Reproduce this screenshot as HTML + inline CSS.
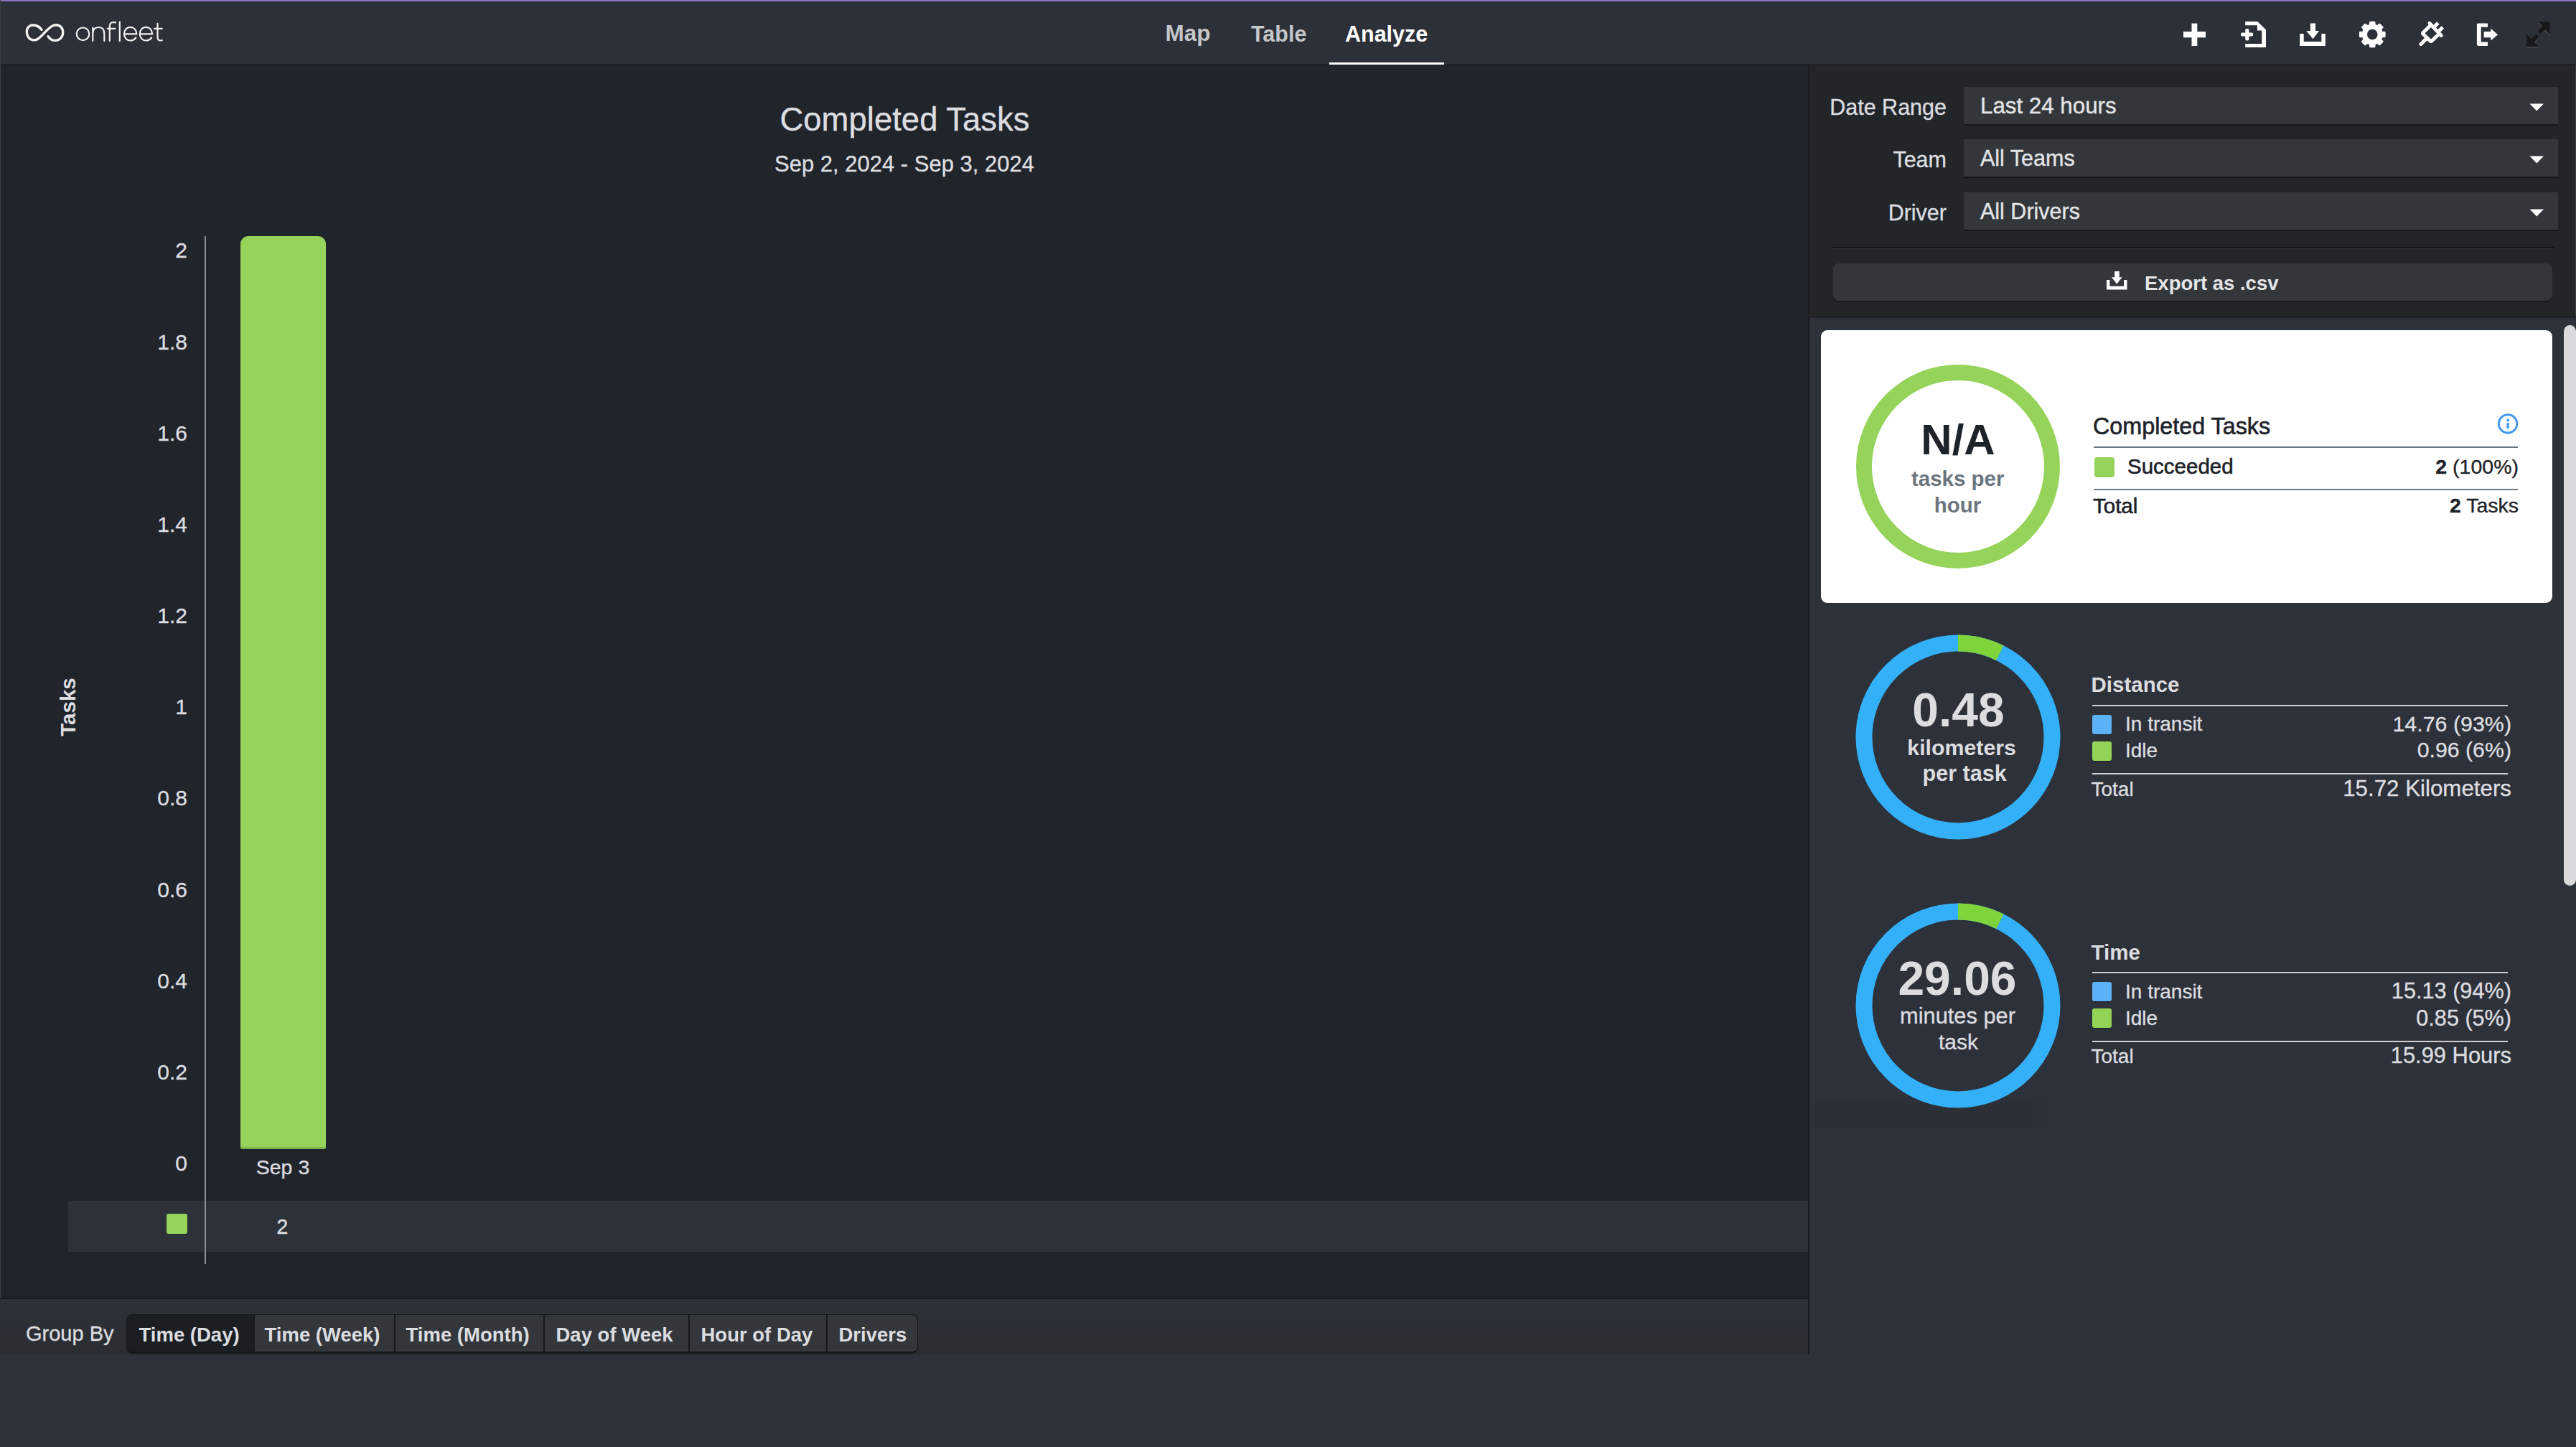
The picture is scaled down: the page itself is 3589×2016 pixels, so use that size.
<!DOCTYPE html>
<html><head><meta charset="utf-8"><title>Onfleet Analyze</title>
<style>
html,body{margin:0;padding:0;width:3589px;height:2016px;overflow:hidden;background:#2d3139;}
body{position:relative;font-family:"Liberation Sans", sans-serif;}
</style></head><body>
<div style="position:absolute;left:0px;top:0px;width:3589px;height:2016px;background:#2d3139;"></div>
<div style="position:absolute;left:0px;top:0px;width:3589px;height:2px;background:#8a70b8;"></div>
<div style="position:absolute;left:0px;top:2px;width:3589px;height:87px;background:#2c3038;"></div>
<div style="position:absolute;left:0px;top:89px;width:3589px;height:1px;background:#1c1f24;"></div>
<div style="position:absolute;left:0px;top:90px;width:2519px;height:1718px;background:#20242b;"></div>
<div style="position:absolute;left:2519px;top:90px;width:2px;height:1797px;background:#181b1f;"></div>
<div style="position:absolute;left:2521px;top:90px;width:1068px;height:351px;background:#222629;"></div>
<div style="position:absolute;left:2521px;top:441px;width:1068px;height:2px;background:#1c1f23;"></div>
<div style="position:absolute;left:3588px;top:90px;width:1px;height:351px;background:#3a3e42;"></div>
<div style="position:absolute;left:2526px;top:1535px;width:334px;height:37px;background:linear-gradient(90deg,rgba(20,30,25,0.09) 85%,rgba(20,30,25,0));"></div>
<div style="position:absolute;left:0px;top:0px;width:1px;height:1886px;background:#3b3f45;"></div>
<div style="position:absolute;left:95px;top:1673px;width:2424px;height:71px;background:#2d3139;"></div>
<div style="position:absolute;left:0px;top:1808px;width:2519px;height:2px;background:#15181c;"></div>
<div style="position:absolute;left:0px;top:1810px;width:2519px;height:77px;background:linear-gradient(#2d3139,#2a2e33);"></div>
<svg style="position:absolute;left:0;top:0" width="240" height="89" viewBox="0 0 240 89">
<g fill="none" stroke="#f2f2f2" stroke-linecap="round">
<path transform="translate(62.3 45.4) scale(0.95 0.88) translate(-62 -45)" vector-effect="non-scaling-stroke" d="M57.5 40.5 C53 33.5 45 31.5 40 34.5 C35 37.5 34.5 46 37.5 51.5 C40.5 57 47 58.5 52 55 C58 51 66 38 74 34 C80 31 87 34 88.5 42 C90 50 85 57.5 77 57.5 C72 57.5 69 54 67 51" stroke-width="3.4"/>
<g stroke-width="2.2">
<circle cx="115.5" cy="47.3" r="8.8"/>
<path d="M129.3 57 V38.5 M129.3 47 C129.3 41 132.5 38 137.5 38 C142.5 38 145.3 41 145.3 47 V57"/>
<path d="M152.8 57 V37 C152.8 32.5 155 31 158 31 L161 31.3 M149.8 39.8 H160.5"/>
<path d="M166.8 30.5 V57"/>
<path d="M173.2 47.3 H190.2 C190.2 41.5 186.5 37.8 181.7 37.8 C176.5 37.8 173 42 173 47.3 C173 52.8 176.8 56.5 181.7 56.5 C185 56.5 187.5 55 189.3 52.5"/>
<path d="M195 47.3 H212 C212 41.5 208.3 37.8 203.5 37.8 C198.3 37.8 194.8 42 194.8 47.3 C194.8 52.8 198.6 56.5 203.5 56.5 C206.8 56.5 209.3 55 211.1 52.5"/>
<path d="M219.5 32.8 V51.5 C219.5 55 221 56.5 223.5 56.5 L225.8 56.2 M215 39.8 H225.8"/>
</g></g></svg>
<div style="position:absolute;top:31.34px;font-size:31.5px;line-height:31.5px;height:31.5px;color:#c4c6c9;font-weight:700;white-space:nowrap;left:1623.50px;">Map</div>
<div style="position:absolute;top:32.18px;font-size:30.5px;line-height:30.5px;height:30.5px;color:#c4c6c9;font-weight:700;white-space:nowrap;left:1743.00px;">Table</div>
<div style="position:absolute;top:32.18px;font-size:30.5px;line-height:30.5px;height:30.5px;color:#ffffff;font-weight:700;white-space:nowrap;left:1874.00px;">Analyze</div>
<div style="position:absolute;left:1852px;top:87px;width:160px;height:3px;background:#ffffff;"></div>
<svg style="position:absolute;left:3030px;top:20px" width="559" height="56" viewBox="3030 20 559 56">
<g fill="#ffffff">
<rect x="3053.5" y="32.6" width="7.8" height="31.4"/>
<rect x="3042" y="44" width="31" height="8.3"/>
<path d="M3128.2 30 H3145.3 L3157 41.5 V66 H3128.2 V61 H3151.3 V42.4 H3144.9 V35.2 H3128.2 Z"/>
<rect x="3128.2" y="40" width="5.2" height="16.5" rx="2"/>
<rect x="3122" y="45.5" width="17.2" height="4.9" rx="2"/>
<path d="M3204.2 46.9 H3209.7 V58 H3234.4 V46.9 H3239.9 V64 H3204.2 Z"/>
<path d="M3218.9 32.6 H3226 V43 H3231.1 L3222.5 54.2 L3213.2 43 H3218.9 Z"/>
<path d="M3450.9 34.5 Q3450.9 32.4 3453 32.4 H3466 V37.7 H3456.7 V58.5 H3466 V63.9 H3453 Q3450.9 63.9 3450.9 61.8 Z"/>
<path d="M3460.7 44.1 H3470.3 V39.7 L3480.1 48.2 L3470.3 56.6 V52.2 H3460.7 Z"/>
</g>
<g transform="translate(3305.3 48)" fill="#ffffff"><path fill-rule="evenodd" stroke="#ffffff" stroke-width="1.2" stroke-linejoin="round" d="M-4.00 -13.31 L-3.30 -17.69 L3.30 -17.69 L4.00 -13.31 A13.9 13.9 0 0 1 6.58 -12.24 L10.18 -14.85 L14.85 -10.18 L12.24 -6.58 A13.9 13.9 0 0 1 13.31 -4.00 L17.69 -3.30 L17.69 3.30 L13.31 4.00 A13.9 13.9 0 0 1 12.24 6.58 L14.85 10.18 L10.18 14.85 L6.58 12.24 A13.9 13.9 0 0 1 4.00 13.31 L3.30 17.69 L-3.30 17.69 L-4.00 13.31 A13.9 13.9 0 0 1 -6.58 12.24 L-10.18 14.85 L-14.85 10.18 L-12.24 6.58 A13.9 13.9 0 0 1 -13.31 4.00 L-17.69 3.30 L-17.69 -3.30 L-13.31 -4.00 A13.9 13.9 0 0 1 -12.24 -6.58 L-14.85 -10.18 L-10.18 -14.85 L-6.58 -12.24 A13.9 13.9 0 0 1 -4.00 -13.31 Z M0 -7.9 A7.9 7.9 0 1 0 0 7.9 A7.9 7.9 0 1 0 0 -7.9 Z"/></g>
<g fill="none" stroke="#ffffff" stroke-width="5" stroke-linecap="round" stroke-linejoin="round">
<path d="M3386.3 35.2 L3376.2 45.3 Q3375.1 46.4 3376.2 47.5 L3385.8 57.1 Q3386.9 58.2 3388 57.1 L3398.3 47.2"/>
<path d="M3372.9 61.5 L3379.4 55"/>
<path d="M3385 32.4 L3401.2 49.4"/>
</g>
<g fill="none" stroke="#ffffff" stroke-width="5" stroke-linecap="butt">
<path d="M3390.6 38.2 L3396.9 31.9"/>
<path d="M3396.9 44.5 L3403.3 38.1"/>
</g>
<g fill="none" stroke="#4b5056" stroke-width="1.6" stroke-linecap="round" opacity="0.8">
<path d="M3520.5 65.6 H3536.2"/>
<path d="M3537.6 46.6 L3547 42.8 L3552.6 48.9"/>
<path d="M3532 58.2 L3536.2 53.6"/>
<path d="M3537.6 32.8 L3541.4 35.6"/>
</g>
<g fill="#17191c">
<path d="M3537.1 30.3 H3552.8 V48.3 Z"/>
<path d="M3520 64.7 V47.3 L3536.4 64.7 Z"/>
</g>
<g stroke="#17191c" stroke-width="6" stroke-linecap="round">
<path d="M3547.5 35.6 L3539.2 43.9"/>
<path d="M3525.3 59.4 L3533.6 51.1"/>
</g>
</svg>
<div style="position:absolute;top:144.48px;font-size:45.5px;line-height:45.5px;height:45.5px;color:#dcdde0;font-weight:400;white-space:nowrap;-webkit-text-stroke:0.35px currentColor;left:-239.50px;width:3000px;text-align:center;">Completed Tasks</div>
<div style="position:absolute;top:213.36px;font-size:31px;line-height:31px;height:31px;color:#dcdde0;font-weight:400;white-space:nowrap;-webkit-text-stroke:0.35px currentColor;left:-240.00px;width:3000px;text-align:center;">Sep 2, 2024 - Sep 3, 2024</div>
<div style="position:absolute;top:334.31px;font-size:30px;line-height:30px;height:30px;color:#dcdde0;font-weight:400;white-space:nowrap;-webkit-text-stroke:0.35px currentColor;left:-2739.00px;width:3000px;text-align:right;">2</div>
<div style="position:absolute;top:461.50px;font-size:30px;line-height:30px;height:30px;color:#dcdde0;font-weight:400;white-space:nowrap;-webkit-text-stroke:0.35px currentColor;left:-2739.00px;width:3000px;text-align:right;">1.8</div>
<div style="position:absolute;top:588.68px;font-size:30px;line-height:30px;height:30px;color:#dcdde0;font-weight:400;white-space:nowrap;-webkit-text-stroke:0.35px currentColor;left:-2739.00px;width:3000px;text-align:right;">1.6</div>
<div style="position:absolute;top:715.88px;font-size:30px;line-height:30px;height:30px;color:#dcdde0;font-weight:400;white-space:nowrap;-webkit-text-stroke:0.35px currentColor;left:-2739.00px;width:3000px;text-align:right;">1.4</div>
<div style="position:absolute;top:843.07px;font-size:30px;line-height:30px;height:30px;color:#dcdde0;font-weight:400;white-space:nowrap;-webkit-text-stroke:0.35px currentColor;left:-2739.00px;width:3000px;text-align:right;">1.2</div>
<div style="position:absolute;top:970.26px;font-size:30px;line-height:30px;height:30px;color:#dcdde0;font-weight:400;white-space:nowrap;-webkit-text-stroke:0.35px currentColor;left:-2739.00px;width:3000px;text-align:right;">1</div>
<div style="position:absolute;top:1097.44px;font-size:30px;line-height:30px;height:30px;color:#dcdde0;font-weight:400;white-space:nowrap;-webkit-text-stroke:0.35px currentColor;left:-2739.00px;width:3000px;text-align:right;">0.8</div>
<div style="position:absolute;top:1224.63px;font-size:30px;line-height:30px;height:30px;color:#dcdde0;font-weight:400;white-space:nowrap;-webkit-text-stroke:0.35px currentColor;left:-2739.00px;width:3000px;text-align:right;">0.6</div>
<div style="position:absolute;top:1351.83px;font-size:30px;line-height:30px;height:30px;color:#dcdde0;font-weight:400;white-space:nowrap;-webkit-text-stroke:0.35px currentColor;left:-2739.00px;width:3000px;text-align:right;">0.4</div>
<div style="position:absolute;top:1479.02px;font-size:30px;line-height:30px;height:30px;color:#dcdde0;font-weight:400;white-space:nowrap;-webkit-text-stroke:0.35px currentColor;left:-2739.00px;width:3000px;text-align:right;">0.2</div>
<div style="position:absolute;top:1606.21px;font-size:30px;line-height:30px;height:30px;color:#dcdde0;font-weight:400;white-space:nowrap;-webkit-text-stroke:0.35px currentColor;left:-2739.00px;width:3000px;text-align:right;">0</div>
<div style="position:absolute;left:285px;top:329px;width:2px;height:1432px;background:#8a9198;"></div>
<div style="position:absolute;left:335px;top:329px;width:119px;height:1272px;background:#95d35a;border-radius:11px 11px 3px 3px;box-shadow:inset 0 -3px 0 #7fb64c;"></div>
<div style="position:absolute;top:1611.87px;font-size:28.5px;line-height:28.5px;height:28.5px;color:#dcdde0;font-weight:400;white-space:nowrap;-webkit-text-stroke:0.35px currentColor;left:-1106.00px;width:3000px;text-align:center;">Sep 3</div>
<div style="position:absolute;left:232px;top:1691px;width:29px;height:28px;background:#95d35a;border-radius:3px;"></div>
<div style="position:absolute;top:1695.45px;font-size:29px;line-height:29px;height:29px;color:#dcdde0;font-weight:400;white-space:nowrap;-webkit-text-stroke:0.35px currentColor;left:-1106.70px;width:3000px;text-align:center;">2</div>
<div style="position:absolute;left:95px;top:984.5px;width:0;height:0;"><div style="position:absolute;left:-100px;top:-15px;width:200px;height:30px;line-height:30px;font-size:29.5px;font-weight:700;color:#dcdde0;text-align:center;transform:rotate(-90deg);white-space:nowrap;">Tasks</div></div>
<div style="position:absolute;top:1844.45px;font-size:29px;line-height:29px;height:29px;color:#dcdde0;font-weight:400;white-space:nowrap;-webkit-text-stroke:0.35px currentColor;left:36.00px;">Group By</div>
<div style="position:absolute;left:176px;top:1831px;width:1103px;height:54px;border-radius:8px;background:#16191c;box-shadow:0 1px 0 #15181b;"></div>
<div style="position:absolute;left:177px;top:1832px;width:176px;height:51px;background:#1b1f23;border-radius:7px 0 0 7px;"></div>
<div style="position:absolute;top:1845.72px;font-size:27.5px;line-height:27.5px;height:27.5px;color:#dcdde0;font-weight:700;white-space:nowrap;left:193.50px;">Time (Day)</div>
<div style="position:absolute;left:355px;top:1832px;width:194px;height:51px;background:#33373c;border-radius:0;"></div>
<div style="position:absolute;top:1845.72px;font-size:27.5px;line-height:27.5px;height:27.5px;color:#dcdde0;font-weight:700;white-space:nowrap;left:368.50px;">Time (Week)</div>
<div style="position:absolute;left:551px;top:1832px;width:206px;height:51px;background:#33373c;border-radius:0;"></div>
<div style="position:absolute;top:1845.72px;font-size:27.5px;line-height:27.5px;height:27.5px;color:#dcdde0;font-weight:700;white-space:nowrap;left:565.50px;">Time (Month)</div>
<div style="position:absolute;left:759px;top:1832px;width:200px;height:51px;background:#33373c;border-radius:0;"></div>
<div style="position:absolute;top:1845.72px;font-size:27.5px;line-height:27.5px;height:27.5px;color:#dcdde0;font-weight:700;white-space:nowrap;left:774.50px;">Day of Week</div>
<div style="position:absolute;left:961px;top:1832px;width:190px;height:51px;background:#33373c;border-radius:0;"></div>
<div style="position:absolute;top:1845.72px;font-size:27.5px;line-height:27.5px;height:27.5px;color:#dcdde0;font-weight:700;white-space:nowrap;left:976.50px;">Hour of Day</div>
<div style="position:absolute;left:1153px;top:1832px;width:125px;height:51px;background:#33373c;border-radius:0 7px 7px 0;"></div>
<div style="position:absolute;top:1845.72px;font-size:27.5px;line-height:27.5px;height:27.5px;color:#dcdde0;font-weight:700;white-space:nowrap;left:1168.50px;">Drivers</div>
<div style="position:absolute;top:134.18px;font-size:30.5px;line-height:30.5px;height:30.5px;color:#dcdde0;font-weight:400;white-space:nowrap;-webkit-text-stroke:0.35px currentColor;left:-288.00px;width:3000px;text-align:right;">Date Range</div>
<div style="position:absolute;left:2736px;top:121px;width:828px;height:52px;background:#33373c;box-shadow:0 2px 0 #15181b;"></div>
<div style="position:absolute;top:131.50px;font-size:31.3px;line-height:31.3px;height:31.3px;color:#e4e5e7;font-weight:400;white-space:nowrap;-webkit-text-stroke:0.35px currentColor;left:2759.00px;">Last 24 hours</div>
<svg style="position:absolute;left:3524px;top:144px" width="21" height="11"><path d="M0.5 0.5 H20 L10.25 10.5 Z" fill="#ffffff"/></svg>
<div style="position:absolute;top:207.48px;font-size:30.5px;line-height:30.5px;height:30.5px;color:#dcdde0;font-weight:400;white-space:nowrap;-webkit-text-stroke:0.35px currentColor;left:-288.00px;width:3000px;text-align:right;">Team</div>
<div style="position:absolute;left:2736px;top:194px;width:828px;height:52px;background:#33373c;box-shadow:0 2px 0 #15181b;"></div>
<div style="position:absolute;top:205.48px;font-size:30.5px;line-height:30.5px;height:30.5px;color:#e4e5e7;font-weight:400;white-space:nowrap;-webkit-text-stroke:0.35px currentColor;left:2759.00px;">All Teams</div>
<svg style="position:absolute;left:3524px;top:217px" width="21" height="11"><path d="M0.5 0.5 H20 L10.25 10.5 Z" fill="#ffffff"/></svg>
<div style="position:absolute;top:280.98px;font-size:30.5px;line-height:30.5px;height:30.5px;color:#dcdde0;font-weight:400;white-space:nowrap;-webkit-text-stroke:0.35px currentColor;left:-288.00px;width:3000px;text-align:right;">Driver</div>
<div style="position:absolute;left:2736px;top:267.5px;width:828px;height:52px;background:#33373c;box-shadow:0 2px 0 #15181b;"></div>
<div style="position:absolute;top:278.98px;font-size:30.5px;line-height:30.5px;height:30.5px;color:#e4e5e7;font-weight:400;white-space:nowrap;-webkit-text-stroke:0.35px currentColor;left:2759.00px;">All Drivers</div>
<svg style="position:absolute;left:3524px;top:290.5px" width="21" height="11"><path d="M0.5 0.5 H20 L10.25 10.5 Z" fill="#ffffff"/></svg>
<div style="position:absolute;left:2552px;top:344px;width:1006px;height:2px;background:#111417;"></div>
<div style="position:absolute;left:2552px;top:346px;width:1006px;height:1px;background:#30343a;"></div>
<div style="position:absolute;left:2554px;top:367px;width:1002px;height:52px;border-radius:8px;background:#33373c;box-shadow:0 2px 0 #15181b;"></div>
<svg style="position:absolute;left:2930px;top:374px" width="40" height="34" viewBox="2930 374 40 34"><g fill="#ffffff">
<path d="M2935 390 H2939.4 V398.8 H2959.1 V390 H2963.5 V403.4 H2935 Z"/>
<path d="M2946.2 377.9 H2952.7 V386.3 H2956.5 L2949.3 395.8 L2942 386.3 H2946.2 Z"/></g></svg>
<div style="position:absolute;top:381.42px;font-size:27.5px;line-height:27.5px;height:27.5px;color:#e4e5e7;font-weight:700;white-space:nowrap;left:2988.00px;">Export as .csv</div>
<div style="position:absolute;left:2537px;top:460px;width:1019px;height:380px;background:#ffffff;border-radius:9px;"></div>
<svg style="position:absolute;left:2577.5px;top:499.5px" width="300" height="300" viewBox="-150 -150 300 300"><circle cx="0" cy="0" r="131" fill="none" stroke="#95d35a" stroke-width="22"/></svg>
<div style="position:absolute;top:583.21px;font-size:60px;line-height:60px;height:60px;color:#1e2329;font-weight:700;white-space:nowrap;left:1228.00px;width:3000px;text-align:center;">N/A</div>
<div style="position:absolute;top:651.53px;font-size:29.5px;line-height:29.5px;height:29.5px;color:#6c757d;font-weight:700;white-space:nowrap;left:1227.70px;width:3000px;text-align:center;">tasks per</div>
<div style="position:absolute;top:689.03px;font-size:29.5px;line-height:29.5px;height:29.5px;color:#6c757d;font-weight:700;white-space:nowrap;left:1227.50px;width:3000px;text-align:center;">hour</div>
<div style="position:absolute;top:578.06px;font-size:32.3px;line-height:32.3px;height:32.3px;color:#1e2329;font-weight:400;white-space:nowrap;-webkit-text-stroke:0.6px currentColor;left:2916.00px;">Completed Tasks</div>
<svg style="position:absolute;left:3478px;top:575px" width="32" height="32" viewBox="0 0 32 32"><circle cx="16.1" cy="15.4" r="12.7" fill="none" stroke="#4499f2" stroke-width="3"/><path d="M16.1 15.6 V20.4" stroke="#4499f2" stroke-width="3.6" stroke-linecap="round"/><circle cx="16.1" cy="10.5" r="2" fill="#4499f2"/></svg>
<div style="position:absolute;left:2917px;top:622px;width:591px;height:2px;background:#6e777f;"></div>
<div style="position:absolute;left:2917.5px;top:637px;width:28.5px;height:28px;background:#95d35a;border-radius:4px;"></div>
<div style="position:absolute;top:635.23px;font-size:29.5px;line-height:29.5px;height:29.5px;color:#1e2329;font-weight:400;white-space:nowrap;-webkit-text-stroke:0.6px currentColor;left:2964.00px;">Succeeded</div>
<div style="position:absolute;top:636.07px;font-size:28.5px;line-height:28.5px;height:28.5px;color:#1e2329;font-weight:400;white-space:nowrap;-webkit-text-stroke:0.35px currentColor;left:509.00px;width:3000px;text-align:right;"><b>2</b> (100%)</div>
<div style="position:absolute;left:2917px;top:681px;width:591px;height:2px;background:#6e777f;"></div>
<div style="position:absolute;top:689.53px;font-size:29.5px;line-height:29.5px;height:29.5px;color:#1e2329;font-weight:400;white-space:nowrap;-webkit-text-stroke:0.6px currentColor;left:2916.00px;">Total</div>
<div style="position:absolute;top:690.37px;font-size:28.5px;line-height:28.5px;height:28.5px;color:#1e2329;font-weight:400;white-space:nowrap;-webkit-text-stroke:0.35px currentColor;left:509.00px;width:3000px;text-align:right;"><b>2</b> Tasks</div>
<svg style="position:absolute;left:2578.2px;top:876.7px" width="300" height="300" viewBox="-150 -150 300 300"><circle cx="0" cy="0" r="131" fill="none" stroke="#33b0f8" stroke-width="23"/><path d="M0 -142.5 A142.5 142.5 0 0 1 63.58 -127.53 L53.32 -106.94 A119.5 119.5 0 0 0 0 -119.5 Z" fill="#7ed43a"/></svg>
<div style="position:absolute;top:955.63px;font-size:66px;line-height:66px;height:66px;color:#dcdde0;font-weight:700;white-space:nowrap;left:1228.50px;width:3000px;text-align:center;">0.48</div>
<div style="position:absolute;top:1026.75px;font-size:30.3px;line-height:30.3px;height:30.3px;color:#dcdde0;font-weight:700;white-space:nowrap;left:1233.10px;width:3000px;text-align:center;">kilometers</div>
<div style="position:absolute;top:1061.90px;font-size:30.6px;line-height:30.6px;height:30.6px;color:#dcdde0;font-weight:700;white-space:nowrap;left:1237.20px;width:3000px;text-align:center;">per task</div>
<div style="position:absolute;top:939.13px;font-size:29.5px;line-height:29.5px;height:29.5px;color:#dcdde0;font-weight:700;white-space:nowrap;left:2913.50px;">Distance</div>
<div style="position:absolute;left:2914.5px;top:981.6px;width:579px;height:2px;background:#cfd1d4;"></div>
<div style="position:absolute;left:2914.7px;top:995.6px;width:27.3px;height:27.3px;background:#5db1f7;border-radius:3px;box-shadow:0 1px 1px rgba(0,0,0,.4);"></div>
<div style="position:absolute;top:995.40px;font-size:28px;line-height:28px;height:28px;color:#dcdde0;font-weight:400;white-space:nowrap;-webkit-text-stroke:0.35px currentColor;left:2961.00px;">In transit</div>
<div style="position:absolute;top:993.37px;font-size:30.4px;line-height:30.4px;height:30.4px;color:#dcdde0;font-weight:400;white-space:nowrap;-webkit-text-stroke:0.35px currentColor;left:499.00px;width:3000px;text-align:right;">14.76 (93%)</div>
<div style="position:absolute;left:2914.7px;top:1032.5px;width:27.3px;height:27.3px;background:#93d456;border-radius:3px;box-shadow:0 1px 1px rgba(0,0,0,.4);"></div>
<div style="position:absolute;top:1032.30px;font-size:28px;line-height:28px;height:28px;color:#dcdde0;font-weight:400;white-space:nowrap;-webkit-text-stroke:0.35px currentColor;left:2961.00px;">Idle</div>
<div style="position:absolute;top:1030.35px;font-size:30.3px;line-height:30.3px;height:30.3px;color:#dcdde0;font-weight:400;white-space:nowrap;-webkit-text-stroke:0.35px currentColor;left:499.00px;width:3000px;text-align:right;">0.96 (6%)</div>
<div style="position:absolute;left:2914.5px;top:1076.9px;width:579px;height:2px;background:#cfd1d4;"></div>
<div style="position:absolute;top:1085.70px;font-size:28px;line-height:28px;height:28px;color:#dcdde0;font-weight:400;white-space:nowrap;-webkit-text-stroke:0.35px currentColor;left:2913.50px;">Total</div>
<div style="position:absolute;top:1082.90px;font-size:31.3px;line-height:31.3px;height:31.3px;color:#dcdde0;font-weight:400;white-space:nowrap;-webkit-text-stroke:0.35px currentColor;left:499.00px;width:3000px;text-align:right;">15.72 Kilometers</div>
<svg style="position:absolute;left:2578.2px;top:1251.2px" width="300" height="300" viewBox="-150 -150 300 300"><circle cx="0" cy="0" r="131" fill="none" stroke="#33b0f8" stroke-width="23"/><path d="M0 -142.5 A142.5 142.5 0 0 1 63.58 -127.53 L53.32 -106.94 A119.5 119.5 0 0 0 0 -119.5 Z" fill="#7ed43a"/></svg>
<div style="position:absolute;top:1330.13px;font-size:66px;line-height:66px;height:66px;color:#dcdde0;font-weight:700;white-space:nowrap;left:1227.00px;width:3000px;text-align:center;">29.06</div>
<div style="position:absolute;top:1400.83px;font-size:30.8px;line-height:30.8px;height:30.8px;color:#dcdde0;font-weight:400;white-space:nowrap;-webkit-text-stroke:0.35px currentColor;left:1227.50px;width:3000px;text-align:center;">minutes per</div>
<div style="position:absolute;top:1436.90px;font-size:30px;line-height:30px;height:30px;color:#dcdde0;font-weight:400;white-space:nowrap;-webkit-text-stroke:0.35px currentColor;left:1228.50px;width:3000px;text-align:center;">task</div>
<div style="position:absolute;top:1311.73px;font-size:29.5px;line-height:29.5px;height:29.5px;color:#dcdde0;font-weight:700;white-space:nowrap;left:2913.50px;">Time</div>
<div style="position:absolute;left:2914.5px;top:1354.2px;width:579px;height:2px;background:#cfd1d4;"></div>
<div style="position:absolute;left:2914.7px;top:1368.2px;width:27.3px;height:27.3px;background:#5db1f7;border-radius:3px;box-shadow:0 1px 1px rgba(0,0,0,.4);"></div>
<div style="position:absolute;top:1368.00px;font-size:28px;line-height:28px;height:28px;color:#dcdde0;font-weight:400;white-space:nowrap;-webkit-text-stroke:0.35px currentColor;left:2961.00px;">In transit</div>
<div style="position:absolute;top:1365.71px;font-size:30.7px;line-height:30.7px;height:30.7px;color:#dcdde0;font-weight:400;white-space:nowrap;-webkit-text-stroke:0.35px currentColor;left:499.00px;width:3000px;text-align:right;">15.13 (94%)</div>
<div style="position:absolute;left:2914.7px;top:1405.1000000000001px;width:27.3px;height:27.3px;background:#93d456;border-radius:3px;box-shadow:0 1px 1px rgba(0,0,0,.4);"></div>
<div style="position:absolute;top:1404.90px;font-size:28px;line-height:28px;height:28px;color:#dcdde0;font-weight:400;white-space:nowrap;-webkit-text-stroke:0.35px currentColor;left:2961.00px;">Idle</div>
<div style="position:absolute;top:1402.70px;font-size:30.6px;line-height:30.6px;height:30.6px;color:#dcdde0;font-weight:400;white-space:nowrap;-webkit-text-stroke:0.35px currentColor;left:499.00px;width:3000px;text-align:right;">0.85 (5%)</div>
<div style="position:absolute;left:2914.5px;top:1449.5px;width:579px;height:2px;background:#cfd1d4;"></div>
<div style="position:absolute;top:1458.30px;font-size:28px;line-height:28px;height:28px;color:#dcdde0;font-weight:400;white-space:nowrap;-webkit-text-stroke:0.35px currentColor;left:2913.50px;">Total</div>
<div style="position:absolute;top:1455.84px;font-size:30.9px;line-height:30.9px;height:30.9px;color:#dcdde0;font-weight:400;white-space:nowrap;-webkit-text-stroke:0.35px currentColor;left:499.00px;width:3000px;text-align:right;">15.99 Hours</div>
<div style="position:absolute;left:3572px;top:453px;width:17px;height:781px;background:#d9dadc;border-radius:9px;"></div>
</body></html>
